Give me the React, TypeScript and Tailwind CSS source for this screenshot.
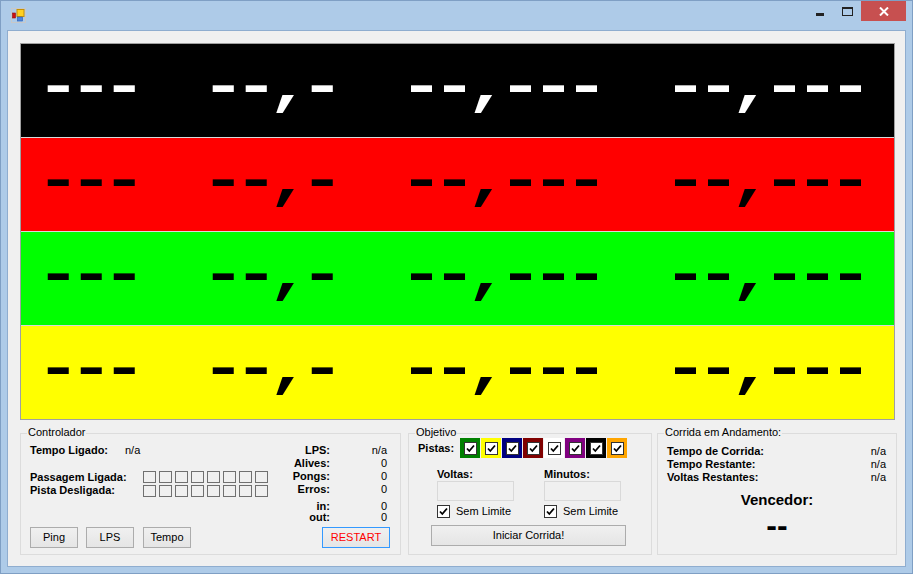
import React from "react";

const uiFont = { fontFamily: '"Liberation Sans", Arial, sans-serif' };

function Check() {
  return (
    <span className="flex h-[13px] w-[13px] shrink-0 items-center justify-center border border-[#333333] bg-white">
      <svg width="11" height="11" viewBox="0 0 11 11">
        <path d="M2 5.5 L4.3 8 L9 2.5" fill="none" stroke="#000" strokeWidth="1.8" />
      </svg>
    </span>
  );
}

function Btn({ children, className = "" }: { children: React.ReactNode; className?: string }) {
  return (
    <div
      className={
        "flex h-[21px] items-center justify-center border bg-gradient-to-b from-[#f0f0f0] to-[#e5e5e5] text-[11px] " +
        className
      }
    >
      {children}
    </div>
  );
}

function Group({ title, className, children }: { title: string; className: string; children: React.ReactNode }) {
  return (
    <div className={"relative h-[122px] border border-[#dcdcdc] " + className}>
      <span className="absolute left-[6px] top-[-8px] bg-[#f0f0f0] px-[1px] text-[11px] leading-[13px] text-black">
        {title}
      </span>
      {children}
    </div>
  );
}

const lanes = [
  { bg: "bg-black", fg: "text-white" },
  { bg: "bg-[#ff0000]", fg: "text-black" },
  { bg: "bg-[#00ff00]", fg: "text-black" },
  { bg: "bg-[#ffff00]", fg: "text-black" },
];

const pistaColors = ["bg-[#008000]", "bg-[#ffff00]", "bg-[#000080]", "bg-[#800000]", "bg-white", "bg-[#800080]", "bg-black", "bg-[#ffa500]"];

export default function App() {
  return (
    <div className="flex h-[574px] w-[913px] flex-col border border-[#7f9fc4] bg-[#aecbe8]" style={uiFont}>
      {/* title bar */}
      <div className="flex h-[29px] shrink-0 items-start">
        <div className="ml-[10px] mt-[7px]">
          <svg width="15" height="15" viewBox="0 0 15 15">
            <rect x="0.5" y="0.5" width="14" height="14" fill="none" stroke="#c8c8c8" />
            <rect x="1.5" y="5" width="3" height="5" fill="#d01010" stroke="#901010" strokeWidth="0.6" />
            <rect x="6" y="1.5" width="7" height="7" fill="#ffd020" stroke="#c89000" />
            <rect x="6.5" y="9" width="5" height="4" fill="#4a86e0" stroke="#2a5ab0" strokeWidth="0.6" />
          </svg>
        </div>
        <div className="ml-auto flex items-start">
          <div className="mt-[12px] h-[3px] w-[8px] bg-[#222]" />
          <div className="ml-[18px] mt-[6px] h-[9px] w-[11px] border border-t-[2px] border-[#222]" />
          <div className="ml-[8px] flex h-[20px] w-[45px] items-center justify-center bg-[#c75050]">
            <svg width="10" height="9" viewBox="0 0 10 9">
              <path d="M1 0.5 L9 8.5 M9 0.5 L1 8.5" stroke="#fff" strokeWidth="2" />
            </svg>
          </div>
          <div className="w-[6px]" />
        </div>
      </div>

      {/* client */}
      <div className="mx-[6px] flex h-[537px] flex-col border border-[#8fadcf] bg-[#f0f0f0]">
        {/* lanes */}
        <div className="ml-[12px] mt-[12px] flex w-[875px] flex-col gap-[1px] border border-[#a0a0a0] bg-[#d8d8d8]">
          {lanes.map((l, i) => (
            <div key={i} className={"flex h-[93px] items-center overflow-hidden pl-[15px] " + l.bg}>
              <span
                className={"origin-left scale-x-[1.35] whitespace-pre text-[55px] font-bold leading-none tracking-[-8.55px] -translate-y-[2px] " + l.fg}
                style={{ fontFamily: '"Liberation Mono", "Courier New", monospace' }}
              >
                {"---  --,-  --,---  --,---"}
              </span>
            </div>
          ))}
        </div>

        {/* bottom groups */}
        <div className="ml-[12px] mt-[13px] flex text-[11px] leading-[13px] text-black">
          {/* Controlador */}
          <Group title="Controlador" className="flex w-[381px] flex-col">
            <div className="flex">
              <div className="flex flex-col pl-[9px] pt-[10px]">
                <div className="flex">
                  <span className="w-[95px] font-bold">Tempo Ligado:</span>
                  <span>n/a</span>
                </div>
                <div className="mt-[14px] flex">
                  <div className="flex w-[113px] flex-col font-bold">
                    <span>Passagem Ligada:</span>
                    <span>Pista Desligada:</span>
                  </div>
                  <div className="grid grid-cols-8 gap-x-[3px] gap-y-[2px]">
                    {Array.from({ length: 16 }).map((_, i) => (
                      <div key={i} className="h-[12px] w-[13px] border border-[#707070]" />
                    ))}
                  </div>
                </div>
              </div>
              <div className="ml-auto grid grid-cols-[auto_57px] pr-[13px] pt-[10px]">
                <span className="text-right font-bold">LPS:</span>
                <span className="text-right">n/a</span>
                <span className="text-right font-bold">Alives:</span>
                <span className="text-right">0</span>
                <span className="text-right font-bold">Pongs:</span>
                <span className="text-right">0</span>
                <span className="text-right font-bold">Erros:</span>
                <span className="text-right">0</span>
                <span className="mt-[4px] text-right font-bold">in:</span>
                <span className="mt-[4px] text-right">0</span>
                <span className="mt-[-2px] text-right font-bold">out:</span>
                <span className="mt-[-2px] text-right">0</span>
              </div>
            </div>
            <div className="mt-auto flex pb-[6px] pl-[9px] pr-[10px]">
              <Btn className="w-[48px] border-[#acacac]">Ping</Btn>
              <Btn className="ml-[8px] w-[48px] border-[#acacac]">LPS</Btn>
              <Btn className="ml-[9px] w-[48px] border-[#acacac]">Tempo</Btn>
              <Btn className="ml-auto w-[68px] border-[#3399ff] text-[#ff0000]">RESTART</Btn>
            </div>
          </Group>

          {/* Objetivo */}
          <Group title="Objetivo" className="ml-[7px] flex w-[244px] flex-col">
            <div className="flex items-center pl-[9px] pt-[4px]">
              <span className="w-[42px] font-bold">Pistas:</span>
              <div className="flex gap-[1px]">
                {pistaColors.map((c, i) => (
                  <div key={i} className={"h-[20px] w-[20px] pl-[4px] pt-[4px] " + c}>
                    <Check />
                  </div>
                ))}
              </div>
            </div>
            <div className="mt-[10px] flex pl-[28px]">
              {["Voltas:", "Minutos:"].map((t, i) => (
                <div key={t} className={"flex w-[77px] flex-col " + (i === 1 ? "ml-[30px]" : "")}>
                  <span className="font-bold">{t}</span>
                  <div className="h-[20px] w-[77px] border border-[#d9d9d9] bg-[#f0f0f0]" />
                  <div className="mt-[4px] flex items-center">
                    <Check />
                    <span className="ml-[6px]">Sem Limite</span>
                  </div>
                </div>
              ))}
            </div>
            <div className="mt-[7px] pl-[22px]">
              <Btn className="w-[195px] border-[#acacac]">Iniciar Corrida!</Btn>
            </div>
          </Group>

          {/* Corrida em Andamento */}
          <Group title="Corrida em Andamento:" className="ml-[5px] flex w-[240px] flex-col">
            <div className="grid grid-cols-[1fr_auto] pl-[9px] pr-[10px] pt-[11px]">
              <span className="font-bold">Tempo de Corrida:</span>
              <span className="text-right">n/a</span>
              <span className="font-bold">Tempo Restante:</span>
              <span className="text-right">n/a</span>
              <span className="font-bold">Voltas Restantes:</span>
              <span className="text-right">n/a</span>
            </div>
            <div className="mt-[7px] text-center text-[15px] font-bold leading-[18px]">Vencedor:</div>
            <div className="mt-0 text-center text-[32px] font-bold leading-[32px]">--</div>
          </Group>
        </div>
      </div>
    </div>
  );
}
